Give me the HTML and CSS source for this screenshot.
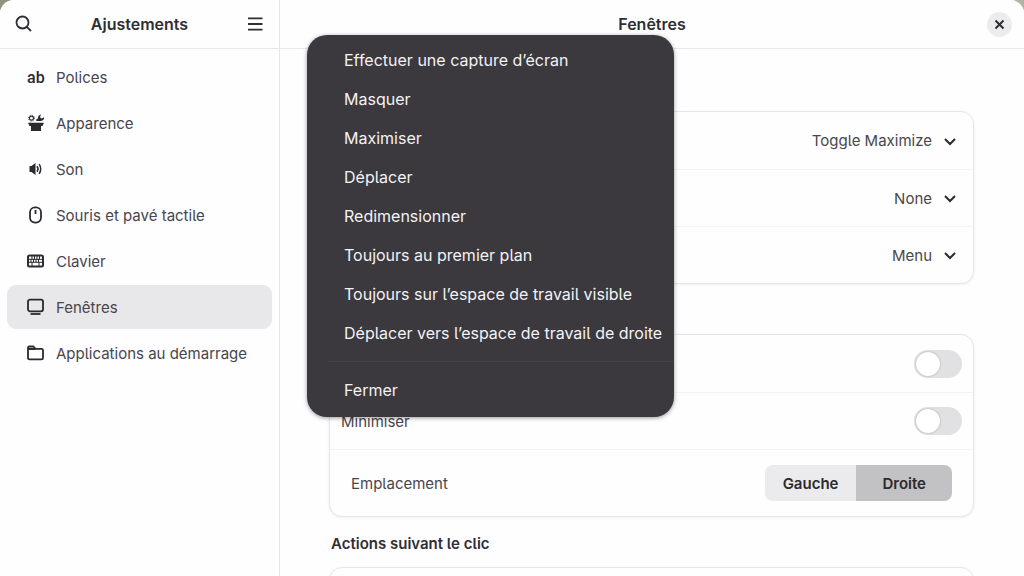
FILE: index.html
```
<!DOCTYPE html>
<html lang="fr">
  <head>
    <meta charset="UTF-8" />
    <meta name="viewport" content="width=device-width, initial-scale=1.0" />
    <title>Ajustements - Fenêtres</title>
    <link rel="stylesheet" href="styles.css">
  </head>
  <body>
    <div class="window">
      <!-- Sidebar -->
      <aside class="sidebar">
        <header class="titlebar">
          <button class="icon-button" aria-label="Rechercher">
            <svg width="18" height="18" viewBox="0 0 18 18" fill="none" stroke="currentColor" stroke-width="1.8">
              <circle cx="7.5" cy="7.5" r="6" />
              <path d="M11.8 11.8 16 16" />
            </svg>
          </button>
          <h1>Ajustements</h1>
          <button class="icon-button" aria-label="Menu principal">
            <svg width="18" height="18" viewBox="0 0 18 18" fill="none" stroke="currentColor" stroke-width="1.8">
              <path d="M2 3.4h14.5M2 9h14.500M2 14.600h14.500" />
            </svg>
          </button>
        </header>
        <nav class="nav">
          <a href="#polices">
            <span class="ab-icon" aria-hidden="true">ab</span>
            Polices
          </a>
          <a href="#apparence">
            <svg width="18" height="18" viewBox="0 0 18 18" fill="currentColor">
              <circle cx="4.500" cy="4.200" r="2" fill="none" stroke="currentColor" stroke-width="1.200" />
              <circle cx="4.500" cy="4.200" r="3" fill="none" stroke="currentColor" stroke-width="1" stroke-dasharray="1 1.356" />
              <path d="M8.500 6 11 4.500C10.800 2.500 12 .8 14 .6L13 3.300 14.500 4.500 17.200 3.200C17.400 5.500 15.500 7.200 13 7H10z" />
              <path d="M1 8.800h16l-1.500 3.200H14v5H4v-5H2.500z" />
            </svg>
            Apparence
          </a>
          <a href="#son">
            <svg width="18" height="18" viewBox="0 0 18 18" fill="currentColor">
              <path d="M2.500 6H4.500L8.500 3v12L4.500 12H2.500z" />
              <path d="M10 6.300Q12 9 10 11.700M12.200 4.200Q15.200 9 12.200 13.800" fill="none" stroke="currentColor" stroke-width="1.500" />
            </svg>
            Son
          </a>
          <a href="#souris">
            <svg width="18" height="18" viewBox="0 0 18 18" fill="none" stroke="currentColor" stroke-width="1.800">
              <rect x="3" y="1.400" width="11" height="15.200" rx="5" />
              <path d="M8.500 4v4" />
            </svg>
            Souris et pavé tactile
          </a>
          <a href="#clavier">
            <svg width="18" height="18" viewBox="0 0 18 18" fill="none" stroke="currentColor">
              <rect x="1" y="3.500" width="15" height="11" rx="1.500" stroke-width="2" />
              <path d="M2 7.300h13M2 10.300h13M5 4v3.300M7.500 4v3.300M10 4v3.300M12.500 4v3.300M4 7v3M6.500 7v3M9 7v3M11.500 7v3M5 10v4M12 10v4" stroke-width="1" />
            </svg>
            Clavier
          </a>
          <a href="#fenetres" class="active" aria-current="page">
            <svg width="18" height="18" viewBox="0 0 18 18" fill="none" stroke="currentColor" stroke-width="1.800">
              <rect x="1" y="1.600" width="15" height="11.700" rx="2" />
              <path d="M3.500 16h10" />
            </svg>
            Fenêtres
          </a>
          <a href="#demarrage">
            <svg width="18" height="18" viewBox="0 0 18 18" fill="none" stroke="currentColor" stroke-width="1.800" stroke-linejoin="round">
              <path d="M1 5V4q0-1.500 1.500-1.500H6.500l2 2.300h6q1.500 0 1.500 1.500v7.400q0 1.600-1.500 1.600h-12q-1.500 0-1.500-1.600zM1.500 5h7" />
            </svg>
            Applications au démarrage
          </a>
        </nav>
      </aside>

      <!-- Settings -->
      <main class="content">
        <header class="titlebar">
          <h2>Fenêtres</h2>
          <button class="close" aria-label="Fermer la fenêtre">
            <svg width="11" height="11" viewBox="0 0 11 11" fill="none" stroke="currentColor" stroke-width="2">
              <path d="M1.500 1.500l8 8M9.500 1.500l-8 8" />
            </svg>
          </button>
        </header>

        <div class="page">
          <section class="card">
            <div class="row">
              <div class="dropdown">
                <select aria-label="Double-clic">
                  <option>Toggle Maximize</option>
                </select>
                <svg width="14" height="14" viewBox="0 0 14 14"><path d="M2 5l5 5 5-5" /></svg>
              </div>
            </div>
            <div class="row">
              <div class="dropdown">
                <select aria-label="Clic du milieu">
                  <option>None</option>
                </select>
                <svg width="14" height="14" viewBox="0 0 14 14"><path d="M2 5l5 5 5-5" /></svg>
              </div>
            </div>
            <div class="row">
              <div class="dropdown">
                <select aria-label="Clic secondaire">
                  <option>Menu</option>
                </select>
                <svg width="14" height="14" viewBox="0 0 14 14"><path d="M2 5l5 5 5-5" /></svg>
              </div>
            </div>
          </section>

          <section class="card">
            <div class="row">
              <input type="checkbox" role="switch" class="switch" aria-label="Maximiser" />
            </div>
            <div class="row">
              <label for="minimize">Minimiser</label>
              <input type="checkbox" role="switch" class="switch" id="minimize" />
            </div>
            <div class="row row-tall">
              <span id="placement">Emplacement</span>
              <div class="segmented" role="group" aria-labelledby="placement">
                <button aria-pressed="false">Gauche</button>
                <button class="selected" aria-pressed="true">Droite</button>
              </div>
            </div>
          </section>

          <h3>Actions suivant le clic</h3>
          <section class="card">
            <div class="row"></div>
          </section>
        </div>

        <!-- Window menu -->
        <div class="menu" role="menu">
          <button role="menuitem">Effectuer une capture d’écran</button>
          <button role="menuitem">Masquer</button>
          <button role="menuitem">Maximiser</button>
          <button role="menuitem">Déplacer</button>
          <button role="menuitem">Redimensionner</button>
          <button role="menuitem">Toujours au premier plan</button>
          <button role="menuitem">Toujours sur l’espace de travail visible</button>
          <button role="menuitem">Déplacer vers l’espace de travail de droite</button>
          <hr />
          <button role="menuitem">Fermer</button>
        </div>
      </main>
    </div>
  </body>
</html>
```
FILE: styles.css
```
* {
  margin: 0;
  padding: 0;
  box-sizing: border-box;
}
body {
  height: 100vh;
  overflow: hidden;
  background: linear-gradient(90deg, #93937a, #b5b3a8);
  font-family: Inter, sans-serif;
  font-feature-settings: "cv05";
  font-size: 15px;
  line-height: 19px;
  color: #48464b;
}
button,
select {
  font: inherit;
  font-feature-settings: inherit;
  color: inherit;
  border: none;
  background: none;
  cursor: pointer;
}
svg {
  display: block;
  flex-shrink: 0;
}
.window {
  display: flex;
  height: 100%;
  background: #fefdff;
  border-radius: 14px 14px 0 0;
  overflow: hidden;
}
.titlebar {
  display: flex;
  align-items: center;
  justify-content: space-between;
  height: 49px;
  padding: 0 12px;
  background: #fefefe;
  border-bottom: 1px solid #e7e6e9;
  color: #2f2e32;
}
h1,
h2,
h3 {
  font-size: 15px;
  font-weight: 600;
  color: #2f2e32;
}
h1,
h2 {
  font-size: 16px;
}

/* Sidebar */
.sidebar {
  width: 280px;
  flex-shrink: 0;
  border-right: 1px solid #e7e6e9;
}
.icon-button {
  padding: 3px;
}
.nav {
  display: flex;
  flex-direction: column;
  gap: 2px;
  padding: 6px 7px;
}
.nav a {
  display: flex;
  align-items: center;
  gap: 11px;
  height: 44px;
  padding: 0 20px;
  border-radius: 9px;
  color: #48464b;
  text-decoration: none;
  white-space: nowrap;
}
.nav a.active {
  background: #e8e7e9;
}
.nav svg,
.ab-icon {
  color: #2b2a2d;
}
.ab-icon {
  width: 18px;
  font-family: Roboto, sans-serif;
  font-size: 16px;
  font-weight: 500;
}

/* Settings */
.content {
  position: relative;
  flex: 1;
  min-width: 0;
}
.content .titlebar h2 {
  flex: 1;
  padding-left: 25px;
  text-align: center;
}
.close {
  display: flex;
  align-items: center;
  justify-content: center;
  width: 25px;
  height: 25px;
  border-radius: 50%;
  background: #ececee;
}
.page {
  padding: 62px 50px 0 49px;
}
.page h3 {
  margin: 17px 0 14px 2px;
}
.card {
  border: 1px solid #e6e5e8;
  border-radius: 13px;
  background: #fefefe;
  box-shadow: 0 1px 3px rgba(0, 0, 0, 0.06);
}
.card + .card {
  margin-top: 50px;
}
.row {
  display: flex;
  align-items: center;
  justify-content: space-between;
  height: 57px;
  padding: 0 11px;
}
.row + .row {
  border-top: 1px solid #f4f3f6;
}
.row-tall {
  height: 67px;
  padding: 0 21px;
}
.dropdown {
  display: flex;
  align-items: center;
  gap: 11px;
  margin-left: auto;
  padding-right: 5px;
}
.dropdown select {
  appearance: none;
  text-align-last: right;
}
.dropdown svg {
  fill: none;
  stroke: #2b2a2d;
  stroke-width: 2;
}
.switch {
  appearance: none;
  display: flex;
  width: 48px;
  height: 28px;
  margin-left: auto;
  padding: 2px;
  border-radius: 14px;
  background: #e1e0e2;
  cursor: pointer;
}
.switch::before {
  content: "";
  width: 24px;
  height: 24px;
  border-radius: 50%;
  background: #fff;
  box-shadow: 0 0 2px rgba(0, 0, 0, 0.3);
}
.switch:checked {
  justify-content: flex-end;
  background: #3584e4;
}
.segmented {
  display: flex;
  border-radius: 8px;
  background: #ebeaec;
  overflow: hidden;
}
.segmented button {
  height: 36px;
  padding: 0 18px;
  font-weight: 600;
  color: #2b2a2d;
}
.segmented .selected {
  padding: 0 26px;
  background: #c2c1c3;
}

/* Window menu */
.menu {
  position: absolute;
  top: 35px;
  left: 27px;
  width: 367px;
  padding: 6px 0 7px;
  border-radius: 20px;
  background: #3b383e;
  box-shadow: 0 1px 4px rgba(0, 0, 0, 0.4);
  font-size: 16px;
}
.menu button {
  display: block;
  width: 100%;
  padding: 10px 0 10px 37px;
  color: #f3f2f4;
  text-align: left;
  white-space: nowrap;
}
.menu hr {
  margin: 8px 0 9px 20px;
  border: none;
  border-top: 1px solid #434046;
}
```
